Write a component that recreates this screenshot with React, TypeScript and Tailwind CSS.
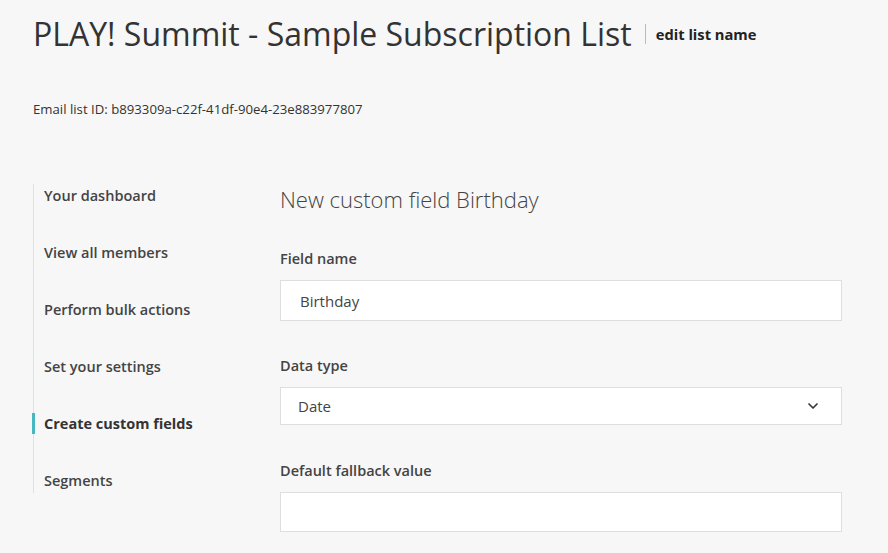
import { ChevronDown } from "lucide-react";

const NAV = [
  "Your dashboard",
  "View all members",
  "Perform bulk actions",
  "Set your settings",
  "Create custom fields",
  "Segments",
];

const ACTIVE = "Create custom fields";

export default function App() {
  return (
    <div
      className="min-h-screen w-full bg-[#f7f7f7] text-[#333]"
      style={{ fontFamily: '"Open Sans", "Noto Sans", sans-serif' }}
    >
      {/* header */}
      <header className="px-[33px] pt-[14px]">
        <div className="flex items-center">
          <h1 className="text-[32px] leading-[40px] text-[#333]">
            PLAY! Summit - Sample Subscription List
          </h1>
          <span className="ml-[13px] h-[20px] w-px bg-[#bbb]" />
          <button className="ml-[10px] text-[14.7px] font-bold text-[#222]">
            edit list name
          </button>
        </div>
        <p className="mt-[47px] text-[13.2px] leading-[17px] text-[#333]">
          Email list ID: b893309a-c22f-41df-90e4-23e883977807
        </p>
      </header>

      <div className="mt-[68px] flex px-[33px]">
        {/* sidebar */}
        <nav className="-mt-[2px] w-[247px] shrink-0 self-start border-l border-[#e0e0e0] pt-[2px]">
          <ul className="flex flex-col">
            {NAV.map((item, i) => {
              const isActive = item === ACTIVE;
              const last = i === NAV.length - 1;
              return (
                <li
                  key={item}
                  className={`relative flex items-start pl-[10px] ${last ? "h-[22px]" : "h-[57px]"}`}
                >
                  {isActive && (
                    <span className="absolute -left-[2px] top-[-1px] h-[21px] w-[3px] bg-[#45b8c1]" />
                  )}
                  <a
                    href="#"
                    className={`text-[14.5px] leading-[20px] ${
                      isActive ? "font-bold text-[#333]" : "font-semibold text-[#444]"
                    }`}
                  >
                    {item}
                  </a>
                </li>
              );
            })}
          </ul>
        </nav>

        {/* main form */}
        <main className="flex-1 pr-[13px]">
          <h2 className="-mt-[2px] text-[22px] font-light leading-[30px] text-[#444]">
            New custom field Birthday
          </h2>

          <label className="mt-[35px] block text-[14.5px] font-semibold leading-[20px] text-[#444]">
            Field name
          </label>
          <input
            defaultValue="Birthday"
            className="mt-[11px] block h-[41px] w-full border border-[#dedede] bg-white px-[19px] text-[15px] text-[#444] outline-none"
          />

          <label className="mt-[35px] block text-[14.5px] font-semibold leading-[20px] text-[#444]">
            Data type
          </label>
          <div className="mt-[11px] flex h-[38px] w-full items-center justify-between border border-[#dedede] bg-white pl-[17px] pr-[20px]">
            <span className="text-[15px] text-[#444]">Date</span>
            <ChevronDown size={16} strokeWidth={2.5} className="text-[#333]" />
          </div>

          <label className="mt-[36px] block text-[14.5px] font-semibold leading-[20px] text-[#444]">
            Default fallback value
          </label>
          <input className="mt-[11px] block h-[40px] w-full border border-[#dedede] bg-white px-[19px] text-[15px] outline-none" />
        </main>
      </div>
    </div>
  );
}
